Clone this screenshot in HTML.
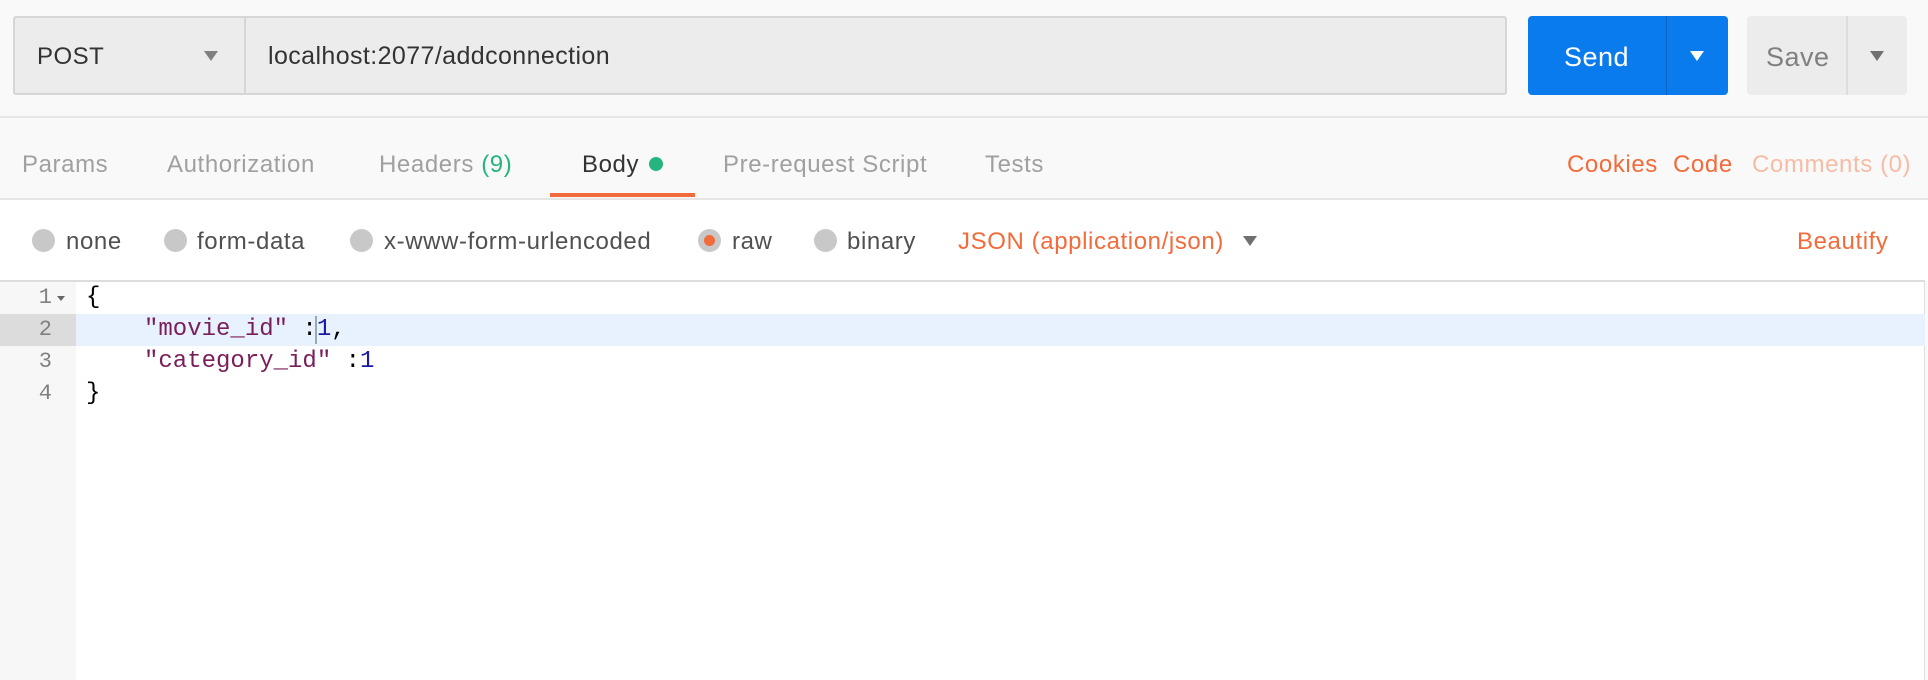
<!DOCTYPE html>
<html><head><style>
*{margin:0;padding:0;box-sizing:border-box}
body{width:1928px;height:680px;background:#f9f9f9;font-family:"Liberation Sans",sans-serif;position:relative;overflow:hidden;color:#505050}
.a{position:absolute;white-space:nowrap}
.tab{position:absolute;top:151px;font-size:24px;letter-spacing:0.6px;color:#a0a0a0;white-space:nowrap}
.rad{position:absolute;top:229px;width:23px;height:23px;border-radius:50%;background:#c8c8c8}
.rl{position:absolute;top:228px;font-size:24px;letter-spacing:0.6px;color:#505050;white-space:nowrap}
.code{position:absolute;font-family:"Liberation Mono",monospace;font-size:24px;color:#000;white-space:pre}
.ln{position:absolute;left:0;text-align:right;font-family:"Liberation Mono",monospace;font-size:22px;color:#808080}
</style></head><body>
<div class="a" style="left:13px;top:16px;width:1494px;height:79px;background:#ececec;border:2px solid #d6d6d6;border-radius:3px"></div>
<div class="a" style="left:244px;top:18px;width:2px;height:75px;background:#d6d6d6"></div>
<div class="a" style="left:37px;top:43px;font-size:24px;letter-spacing:0.5px;color:#333">POST</div>
<div class="a" style="left:204px;top:51px;width:0;height:0;border-left:7px solid transparent;border-right:7px solid transparent;border-top:10px solid #808080"></div>
<div class="a" style="left:268px;top:42px;font-size:25px;letter-spacing:0.4px;color:#333">localhost:2077/addconnection</div>
<div class="a" style="left:1528px;top:16px;width:200px;height:79px;background:#097bed;border-radius:4px"></div>
<div class="a" style="left:1666px;top:16px;width:1px;height:79px;background:#0a64c4"></div>
<div class="a" style="left:1564px;top:42px;font-size:27px;letter-spacing:0.5px;color:#fff">Send</div>
<div class="a" style="left:1690px;top:51px;border-left:7px solid transparent;border-right:7px solid transparent;border-top:10px solid #fff"></div>
<div class="a" style="left:1747px;top:16px;width:160px;height:79px;background:#ececec;border-radius:4px"></div>
<div class="a" style="left:1846px;top:16px;width:2px;height:79px;background:#ddd"></div>
<div class="a" style="left:1766px;top:42px;font-size:27px;letter-spacing:0.5px;color:#808080">Save</div>
<div class="a" style="left:1870px;top:51px;border-left:7px solid transparent;border-right:7px solid transparent;border-top:10px solid #707070"></div>
<div class="a" style="left:0;top:116px;width:1928px;height:2px;background:#e6e6e6"></div>
<div class="tab" style="left:22px">Params</div>
<div class="tab" style="left:167px">Authorization</div>
<div class="tab" style="left:379px">Headers <span style="color:#26b47f">(9)</span></div>
<div class="tab" style="left:582px;color:#333">Body</div>
<div class="a" style="left:649px;top:157px;width:14px;height:14px;border-radius:50%;background:#26b47f"></div>
<div class="tab" style="left:723px">Pre-request Script</div>
<div class="tab" style="left:985px">Tests</div>
<div class="tab" style="left:1567px;color:#f26b3a">Cookies</div>
<div class="tab" style="left:1673px;color:#f26b3a">Code</div>
<div class="tab" style="left:1752px;color:#f6bca5">Comments (0)</div>
<div class="a" style="left:550px;top:193px;width:145px;height:4px;background:#f26b3a"></div>
<div class="a" style="left:0;top:198px;width:1928px;height:83px;background:#fff;border-top:2px solid #e6e6e6"></div>
<div class="rad" style="left:32px"></div><div class="rl" style="left:66px">none</div>
<div class="rad" style="left:164px"></div><div class="rl" style="left:197px">form-data</div>
<div class="rad" style="left:350px"></div><div class="rl" style="left:384px">x-www-form-urlencoded</div>
<div class="rad" style="left:698px"></div><div class="a" style="left:704px;top:235px;width:11px;height:11px;border-radius:50%;background:#f26b3a"></div><div class="rl" style="left:732px">raw</div>
<div class="rad" style="left:814px"></div><div class="rl" style="left:847px">binary</div>
<div class="rl" style="left:958px;color:#f26b3a">JSON (application/json)</div>
<div class="a" style="left:1243px;top:236px;border-left:7px solid transparent;border-right:7px solid transparent;border-top:10px solid #707070"></div>
<div class="rl" style="left:1797px;color:#f26b3a">Beautify</div>
<div class="a" style="left:0;top:280px;width:1925px;height:400px;background:#fff;border-top:2px solid #ddd;border-right:1px solid #ddd"></div>
<div class="a" style="left:0;top:282px;width:76px;height:398px;background:#f7f7f7"></div>
<div class="a" style="left:0;top:314px;width:76px;height:32px;background:#dcdcdc"></div>
<div class="a" style="left:76px;top:314px;width:1849px;height:32px;background:#e8f2fe"></div>
<div class="ln" style="top:285px;width:52px">1</div>
<div class="a" style="left:57px;top:296px;border-left:4px solid transparent;border-right:4px solid transparent;border-top:5px solid #666"></div>
<div class="ln" style="top:317px;width:52px">2</div>
<div class="ln" style="top:349px;width:52px">3</div>
<div class="ln" style="top:381px;width:52px">4</div>
<div class="code" style="left:86px;top:284px">{</div>
<div class="code" style="left:144px;top:316px"><span style="color:#7a1e5a">"movie_id"</span> :<span style="color:#1a1aa6">1</span>,</div>
<div class="a" style="left:315px;top:316px;width:2px;height:28px;background:#9aa"></div>
<div class="code" style="left:144px;top:348px"><span style="color:#7a1e5a">"category_id"</span> :<span style="color:#1a1aa6">1</span></div>
<div class="code" style="left:86px;top:380px">}</div>
</body></html>
